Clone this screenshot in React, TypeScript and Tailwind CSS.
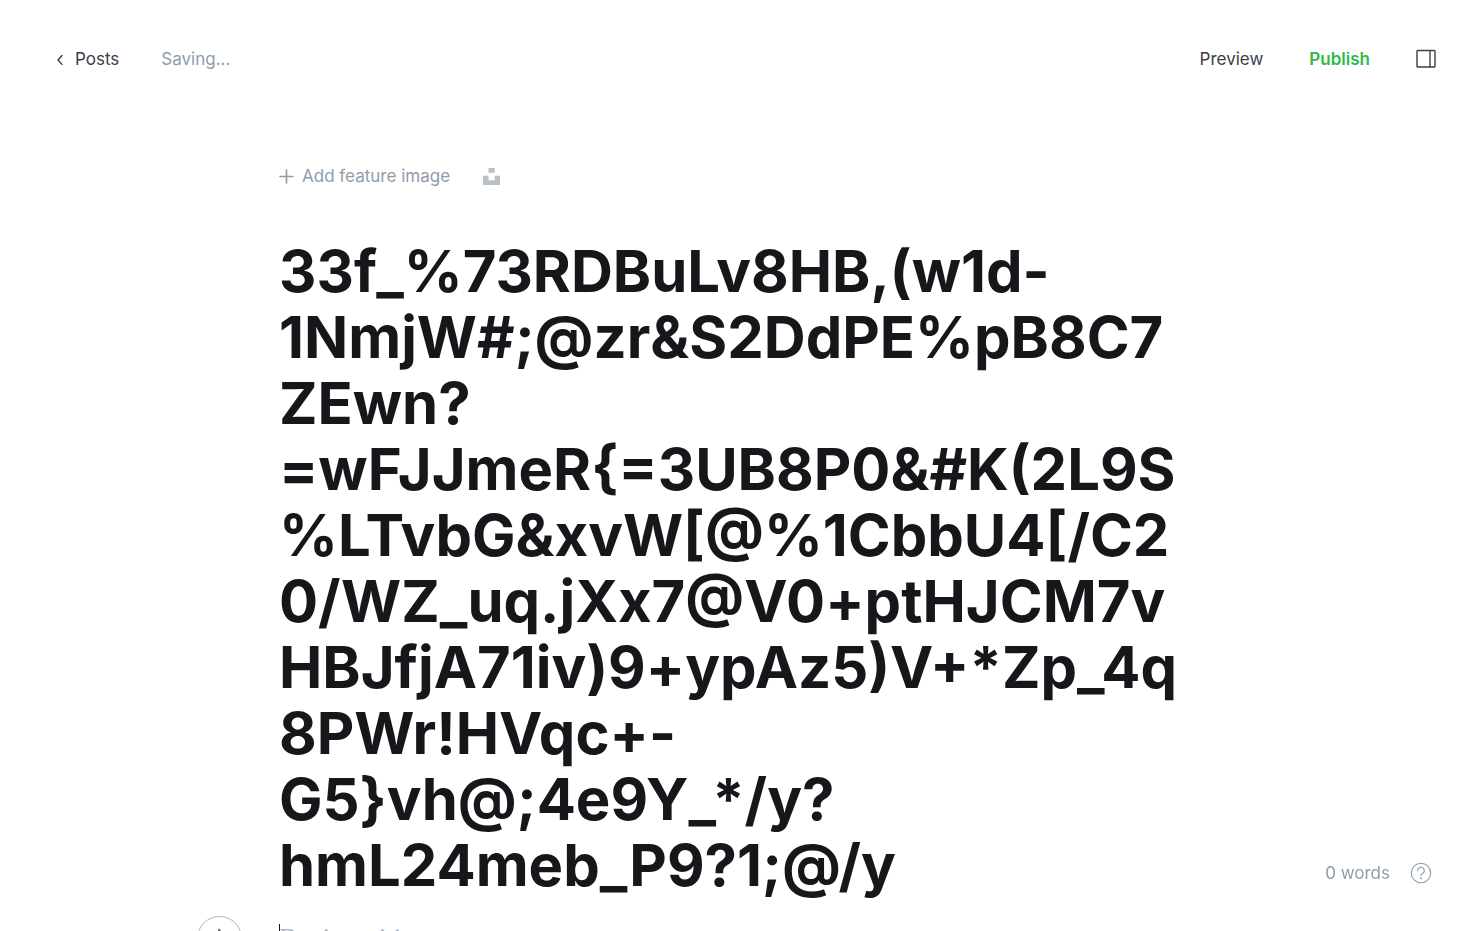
import { useState } from "react";

const INITIAL_TITLE =
  "33f_%73RDBuLv8HB,(w1d-1NmjW#;@zr&S2DdPE%pB8C7ZEwn?=wFJJmeR{=3UB8P0&#K(2L9S%LTvbG&xvW[@%1CbbU4[/C20/WZ_uq.jXx7@V0+ptHJCM7vHBJfjA71iv)9+ypAz5)V+*Zp_4q8PWr!HVqc+-G5}vh@;4e9Y_*/y?hmL24meb_P9?1;@/y";

function ChevronIcon() {
  return (
    <svg className="h-3 w-2" viewBox="0 0 8 12" fill="none" stroke="currentColor" strokeWidth="1.4" strokeLinecap="round" strokeLinejoin="round" aria-hidden="true">
      <path d="M6 2.500 2 7l4 4.400" />
    </svg>
  );
}

function SidebarIcon() {
  return (
    <svg className="h-5 w-5" viewBox="0 0 20 20" fill="none" stroke="currentColor" strokeWidth="1.4" aria-hidden="true">
      <rect x="1" y="1.500" width="18" height="16.5" rx=".8" />
      <path d="M14 1.500v16.500" />
    </svg>
  );
}

function PlusIcon({ className }: { className: string }) {
  return (
    <svg className={className} viewBox="0 0 16 16" fill="none" stroke="currentColor" strokeWidth="1.6" strokeLinecap="round" aria-hidden="true">
      <path d="M7.500 2v13M1 8.500h13" />
    </svg>
  );
}

function UnsplashIcon() {
  return (
    <svg className="h-[18px] w-[17px]" viewBox="0 0 17 18" fill="currentColor" aria-hidden="true">
      <path d="M5.500 1h6.200v4.800H5.500zM0 8.800h5.500v4.400h6.200V8.800H17V18H0z" />
    </svg>
  );
}

function HelpIcon() {
  return (
    <svg className="h-[22px] w-[22px]" viewBox="0 0 22 22" fill="none" stroke="currentColor" strokeWidth="1.1" strokeLinecap="round" strokeLinejoin="round" aria-hidden="true">
      <circle cx="11" cy="11" r="9.7" />
      <path d="M7.700 8.600a3.300 3.300 0 1 1 4.800 2.900c-1 .5-1.500 1-1.500 1.900v.4" />
      <circle cx="11" cy="16.200" r=".4" fill="currentColor" />
    </svg>
  );
}

export default function App() {
  const [title, setTitle] = useState(INITIAL_TITLE);
  const [body, setBody] = useState("");

  return (
    <div className="flex h-screen flex-col overflow-hidden bg-white font-['Inter',sans-serif] text-[17px] leading-6 text-[#394047]">
      <header className="flex shrink-0 items-center justify-between py-[47px] pr-[47px] pl-14">
        <div className="flex items-center gap-[42px]">
          <a href="#posts" className="flex items-center gap-[11px]">
            <ChevronIcon />
            Posts
          </a>
          <span className="text-[#8e9cac]">Saving...</span>
        </div>
        <div className="flex items-center gap-[46px]">
          <button type="button">Preview</button>
          <button type="button" className="font-semibold text-[#30b94a]">Publish</button>
          <button type="button" aria-label="Settings">
            <SidebarIcon />
          </button>
        </div>
      </header>

      <main className="mx-auto flex w-full max-w-[925px] flex-col pt-[46px]">
        <div className="flex items-center gap-[33px] text-[#8e9cac]">
          <button type="button" className="flex items-center gap-[7px]">
            <PlusIcon className="h-4 w-4" />
            Add feature image
          </button>
          <button type="button" aria-label="Unsplash" className="text-[#b9c1c8]">
            <UnsplashIcon />
          </button>
        </div>

        <textarea
          aria-label="Post title"
          value={title}
          onChange={(e) => setTitle(e.target.value)}
          spellCheck={false}
          className="mt-[50px] field-sizing-content w-full shrink-0 resize-none overflow-hidden pr-2 pb-2 text-[58px] leading-[66px] font-bold break-words text-[#15171a] outline-none"
        />

        <div className="relative mt-[10px] shrink-0">
          <button
            type="button"
            aria-label="Add a card"
            className="absolute top-0 -left-[82px] flex h-[45px] w-[45px] items-center justify-center rounded-full border border-[#aeb7c1] text-[#5d6873]"
          >
            <PlusIcon className="h-6 w-6" />
          </button>
          <textarea
            aria-label="Post content"
            rows={1}
            value={body}
            onChange={(e) => setBody(e.target.value)}
            placeholder="Begin writing your post..."
            className="block w-full resize-none pt-[6px] font-['Liberation_Serif',serif] text-[27px] leading-8 caret-transparent outline-none placeholder:text-[#aeb7c1]"
          />
          {body === "" && <span aria-hidden="true" className="absolute top-2 left-0 h-7 w-px bg-[#15171a]" />}
        </div>
      </main>

      <footer className="fixed right-[51px] bottom-[46px] flex items-center gap-5 text-[#8e9cac]">
        <span>0 words</span>
        <button type="button" aria-label="Help">
          <HelpIcon />
        </button>
      </footer>
    </div>
  );
}
